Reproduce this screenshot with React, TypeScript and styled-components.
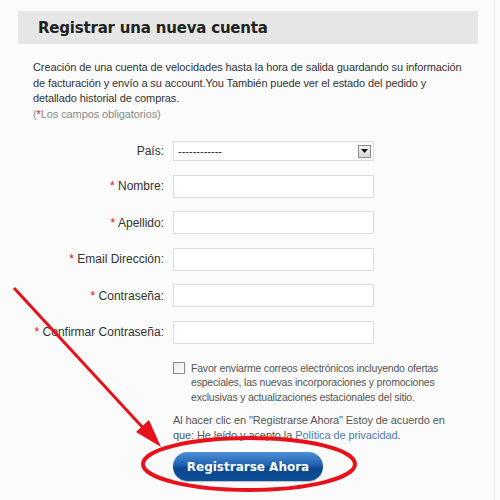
import styled, { createGlobalStyle } from "styled-components";

const GlobalStyle = createGlobalStyle`
  html, body {
    margin: 0;
    padding: 0;
    background: #fbfbfb;
  }
`;

const Page = styled.div`
  position: relative;
  width: 495px;
  height: 500px;
  box-sizing: border-box;
  padding: 11px 0 0 18px;
  border-right: 1px solid #ececec;
  font-family: "Liberation Sans", Arial, sans-serif;
  color: #333;
  overflow: hidden;
`;

const TitleBar = styled.div`
  width: 460px;
  height: 33px;
  background: #e6e6e6;
  display: flex;
  align-items: center;
  padding-left: 20px;
  box-sizing: border-box;
`;

const Title = styled.h1`
  margin: 0;
  font-family: "DejaVu Sans", Verdana, sans-serif;
  font-size: 15px;
  letter-spacing: -0.2px;
  font-weight: bold;
  color: #222;
`;

const Intro = styled.p`
  margin: 16px 0 0 15px;
  width: 445px;
  font-size: 11px;
  letter-spacing: -0.1px;
  line-height: 15.5px;
  color: #333;
  white-space: nowrap;
`;

const Note = styled.span`
  display: block;
  color: #8a8a8a;
`;

const Star = styled.span`
  color: #e01010;
`;

const Form = styled.form`
  display: flex;
  flex-direction: column;
  gap: 13.6px;
  margin-top: 19px;
`;

const Row = styled.div`
  display: grid;
  grid-template-columns: 146px 201px;
  column-gap: 9px;
  align-items: center;
  height: ${(p: { $h?: number }) => p.$h ?? 23}px;
`;

const Label = styled.label`
  text-align: right;
  font-size: 12px;
  color: #333;
`;

const Input = styled.input`
  width: 201px;
  height: 23px;
  box-sizing: border-box;
  border: 1px solid #dcdcdc;
  background: #fff;
  margin: 0;
`;

const Select = styled.div`
  width: 201px;
  height: 20px;
  box-sizing: border-box;
  border: 1px solid #dcdcdc;
  background: #fff;
  display: flex;
  align-items: center;
  justify-content: space-between;
  padding: 0 2px 0 4px;
  font-size: 11px;
  color: #222;
`;

const DropButton = styled.span`
  width: 13px;
  height: 13px;
  box-sizing: border-box;
  border: 1px solid #8f8f8f;
  background: linear-gradient(#f4f4f4, #d6d6d6);
  display: flex;
  align-items: center;
  justify-content: center;
`;

const Lower = styled.div`
  margin-left: 155px;
  width: 290px;
  display: flex;
  flex-direction: column;
`;

const OptIn = styled.div`
  display: flex;
  gap: 6px;
  margin-top: 17px;
  font-size: 10.5px;
  letter-spacing: -0.2px;
  line-height: 14.5px;
  color: #555;
`;

const Box = styled.span`
  flex: none;
  width: 12px;
  height: 12px;
  margin-top: 1px;
  box-sizing: border-box;
  border: 1px solid #8a8a8a;
  background: linear-gradient(135deg, #e8e8e8, #fdfdfd);
`;

const OptText = styled.span`
  width: 262px;
`;

const Terms = styled.p`
  margin: 9px 0 0;
  width: 275px;
  font-size: 11px;
  letter-spacing: -0.1px;
  line-height: 15px;
  color: #555;
`;

const Link = styled.a`
  color: #4e7bb1;
  text-decoration: none;
`;

const SubmitButton = styled.button`
  margin-top: 9px;
  width: 150px;
  height: 29px;
  border: none;
  border-radius: 15px;
  background: linear-gradient(#4f8fd6 0%, #1f62b0 45%, #0b4890 55%, #0d4f99 100%);
  box-shadow: 0 1px 1px rgba(0, 0, 0, 0.25);
  color: #fff;
  font-family: "DejaVu Sans", Verdana, sans-serif;
  font-size: 12px;
  font-weight: bold;
  cursor: pointer;
`;

const Overlay = styled.svg`
  position: absolute;
  left: 0;
  top: 0;
  pointer-events: none;
`;

const fields = [
  "Nombre",
  "Apellido",
  "Email Dirección",
  "Contraseña",
  "Confirmar Contraseña",
];

const App = () => {
  return (
    <Page>
      <GlobalStyle />
      <TitleBar>
        <Title>Registrar una nueva cuenta</Title>
      </TitleBar>
      <Intro>
        Creación de una cuenta de velocidades hasta la hora de salida guardando su información
        <br />
        de facturación y envío a su account.You También puede ver el estado del pedido y
        <br />
        detallado historial de compras.
        <Note>
          (<Star>*</Star>Los campos obligatorios)
        </Note>
      </Intro>
      <Form>
        <Row $h={20}>
          <Label>País:</Label>
          <Select>
            <span>------------</span>
            <DropButton>
              <svg width="7" height="4" viewBox="0 0 7 4">
                <path d="M0 0h7L3.5 4z" fill="#111" />
              </svg>
            </DropButton>
          </Select>
        </Row>
        {fields.map((f) => (
          <Row key={f}>
            <Label>
              <Star>*</Star> {f}:
            </Label>
            <Input type={f.startsWith("Con") ? "password" : "text"} />
          </Row>
        ))}
      </Form>
      <Lower>
        <OptIn>
          <Box />
          <OptText>
            Favor enviarme correos electrónicos incluyendo ofertas especiales, las nuevas
            incorporaciones y promociones exclusivas y actualizaciones estacionales del sitio.
          </OptText>
        </OptIn>
        <Terms>
          Al hacer clic en "Registrarse Ahora" Estoy de acuerdo en que: He leído y acepto la{" "}
          <Link href="#">Política de privacidad</Link>.
        </Terms>
        <SubmitButton type="button">Registrarse Ahora</SubmitButton>
      </Lower>
      <Overlay width="500" height="500" viewBox="0 0 500 500">
        <line x1="14" y1="288" x2="145" y2="430" stroke="#e8101a" strokeWidth="3" />
        <polygon points="161,447 136,432 149,420" fill="#e8101a" />
        <ellipse cx="249" cy="464" rx="106" ry="26" fill="none" stroke="#e8101a" strokeWidth="4" />
      </Overlay>
    </Page>
  );
};

export default App;
